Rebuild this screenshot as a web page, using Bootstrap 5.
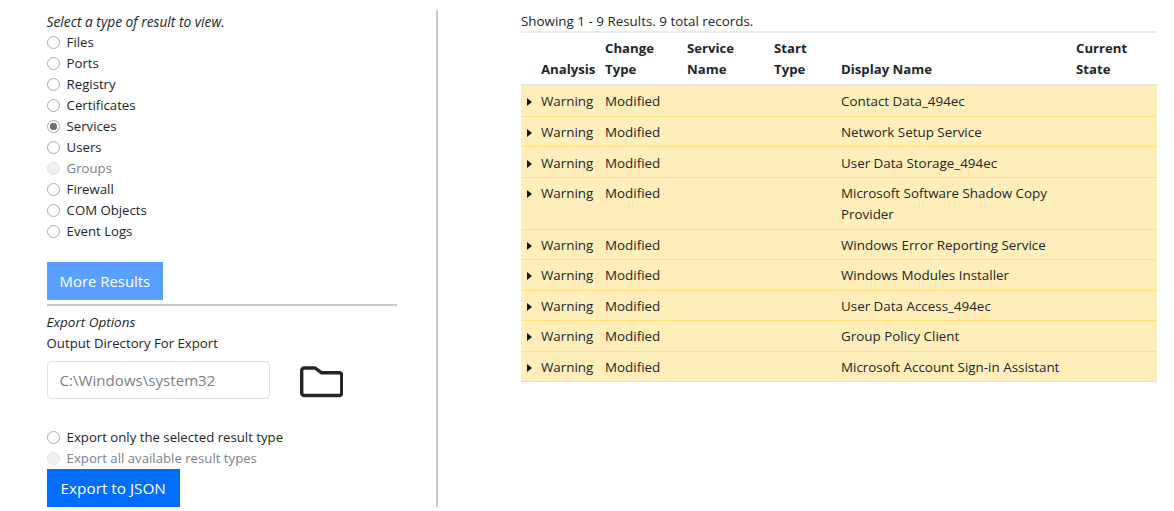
<!DOCTYPE html>
<html lang="en">
<head>
<meta charset="utf-8">
<title>Results</title>
<link href="https://cdn.jsdelivr.net/npm/bootstrap@5.3.0/dist/css/bootstrap.min.css" rel="stylesheet">
<style>
html,body{height:100%;overflow:hidden}
body{font-family:"Open Sans","Noto Sans",sans-serif;font-size:13.2px;line-height:21px;color:#212529;background:#fff}
.page-wrap{padding-top:10px;height:507px}
.left-pane{width:438px;height:497px;padding:1px 39px 0 46.6px;border-right:2px solid #c8c8c8}
.right-pane{margin-left:83px;width:636px;padding-top:1px}
.intro-em{font-size:13.75px}
.opts-em{font-size:13.5px}
.opt-row{display:flex;align-items:center;height:21px;margin:0;padding:0;min-height:21px}
.opt-row .form-check-input{width:13px;height:13px;margin:0 7px 0 0;float:none;border:1px solid #aaa;flex:none;background-color:#fff}
.opt-row .form-check-input:checked{background-color:#fff;border-color:#aaa;background-image:radial-gradient(circle,#6f6f6f 0 3.4px,transparent 4px)}
.opt-row .form-check-input:disabled{opacity:1;background:#efefef;border-color:#e2e2e2}
.opt-row .form-check-input:disabled~.form-check-label{opacity:1;color:#7b8087}
.btn-main{font-size:15.3px;line-height:24px;padding:6px 13px;height:38px;border-radius:0;background:#006dff;border:1px solid #006dff;color:#fff}
.btn-main:disabled{background:#599fff;border-color:#599fff;opacity:1;color:#fff}
.more-btn{margin-top:20px;font-size:14.9px;padding:6px 12px}
.split-rule{height:2px;background:#c8c8c8;margin:4px 0 6px;opacity:1;border:0}
.dir-row{margin-top:7px}
.dir-input{width:223.5px;height:38px;font-size:15.1px;padding:6px 12px;border:1px solid #dee2e6;border-radius:4px;color:#6c757d}
.dir-input::placeholder{color:#7b8087;opacity:1}
.folder-ico{width:43px;height:32px;margin-left:29.500px;margin-top:4.500px;flex:none}
.export-radios{margin-top:28px}
.count-line{height:21px;font-size:13.4px}
.res-table{table-layout:fixed;width:636px;margin:-1px 0 0;font-size:13.4px;line-height:21px}
.res-table.table-sm>:not(caption)>*>*{padding:5.200px 0 3.400px;vertical-align:top;box-shadow:none}
.res-table.table-sm>thead>tr>th{vertical-align:bottom;font-weight:700;font-size:13.2px;background:#fff;padding:5px 0 4.200px;border-top:2px solid #e9ecef;border-bottom:2px solid #e2e5ea;color:#212529}
.res-table.table-sm>tbody>tr>*{background:#ffeeba;border-bottom:1px solid #ffdf7e;color:#212529}
.res-table>tbody{border-top:0}
.caret-mark{display:inline-block;width:0;height:0;border-top:4px solid transparent;border-bottom:4px solid transparent;border-left:5px solid #111;margin:0 0 0 6px;vertical-align:0}
</style>
</head>
<body>
<div class="page-wrap d-flex">
  <div class="left-pane">
    <div class="intro-em"><em>Select a type of result to view.</em></div>
    <div class="form-check opt-row"><input class="form-check-input" type="radio" name="rt" id="r1"><label class="form-check-label" for="r1">Files</label></div>
    <div class="form-check opt-row"><input class="form-check-input" type="radio" name="rt" id="r2"><label class="form-check-label" for="r2">Ports</label></div>
    <div class="form-check opt-row"><input class="form-check-input" type="radio" name="rt" id="r3"><label class="form-check-label" for="r3">Registry</label></div>
    <div class="form-check opt-row"><input class="form-check-input" type="radio" name="rt" id="r4"><label class="form-check-label" for="r4">Certificates</label></div>
    <div class="form-check opt-row"><input class="form-check-input" type="radio" name="rt" id="r5" checked><label class="form-check-label" for="r5">Services</label></div>
    <div class="form-check opt-row"><input class="form-check-input" type="radio" name="rt" id="r6"><label class="form-check-label" for="r6">Users</label></div>
    <div class="form-check opt-row"><input class="form-check-input" type="radio" name="rt" id="r7" disabled><label class="form-check-label" for="r7">Groups</label></div>
    <div class="form-check opt-row"><input class="form-check-input" type="radio" name="rt" id="r8"><label class="form-check-label" for="r8">Firewall</label></div>
    <div class="form-check opt-row"><input class="form-check-input" type="radio" name="rt" id="r9"><label class="form-check-label" for="r9">COM Objects</label></div>
    <div class="form-check opt-row"><input class="form-check-input" type="radio" name="rt" id="r10"><label class="form-check-label" for="r10">Event Logs</label></div>
    <button class="btn btn-main more-btn d-block" type="button" disabled>More Results</button>
    <hr class="split-rule">
    <div class="opts-em"><em>Export Options</em></div>
    <div>Output Directory For Export</div>
    <div class="d-flex dir-row">
      <input class="form-control dir-input" type="text" placeholder="C:\Windows\system32">
      <svg class="folder-ico" viewBox="0 0 43 32" fill="none" stroke="#212529" stroke-width="3.4" stroke-linejoin="round" aria-hidden="true"><path d="M1.700 4.500a2.500 2.500 0 0 1 2.500-2.500h11l6.500 4.800h17.600a2.500 2.500 0 0 1 2.500 2.500v17.700a2.500 2.500 0 0 1-2.500 2.500h-35.100a2.500 2.500 0 0 1-2.500-2.500z"/></svg>
    </div>
    <div class="export-radios">
      <div class="form-check opt-row"><input class="form-check-input" type="radio" name="ex" id="e1"><label class="form-check-label" for="e1">Export only the selected result type</label></div>
      <div class="form-check opt-row"><input class="form-check-input" type="radio" name="ex" id="e2" disabled><label class="form-check-label" for="e2">Export all available result types</label></div>
    </div>
    <button class="btn btn-main d-block" type="button">Export to JSON</button>
  </div>
  <div class="right-pane">
    <div class="count-line">Showing 1 - 9 Results. 9 total records.</div>
    <table class="table table-sm res-table">
      <colgroup><col style="width:20px"><col style="width:64px"><col style="width:82px"><col style="width:87px"><col style="width:67px"><col style="width:235px"><col style="width:81px"></colgroup>
      <thead><tr><th></th><th>Analysis</th><th>Change<br>Type</th><th>Service<br>Name</th><th>Start<br>Type</th><th>Display Name</th><th>Current<br>State</th></tr></thead>
      <tbody>
        <tr><td><span class="caret-mark"></span></td><td>Warning</td><td>Modified</td><td></td><td></td><td>Contact Data_494ec</td><td></td></tr>
        <tr><td><span class="caret-mark"></span></td><td>Warning</td><td>Modified</td><td></td><td></td><td>Network Setup Service</td><td></td></tr>
        <tr><td><span class="caret-mark"></span></td><td>Warning</td><td>Modified</td><td></td><td></td><td>User Data Storage_494ec</td><td></td></tr>
        <tr><td><span class="caret-mark"></span></td><td>Warning</td><td>Modified</td><td></td><td></td><td>Microsoft Software Shadow Copy<br>Provider</td><td></td></tr>
        <tr><td><span class="caret-mark"></span></td><td>Warning</td><td>Modified</td><td></td><td></td><td>Windows Error Reporting Service</td><td></td></tr>
        <tr><td><span class="caret-mark"></span></td><td>Warning</td><td>Modified</td><td></td><td></td><td>Windows Modules Installer</td><td></td></tr>
        <tr><td><span class="caret-mark"></span></td><td>Warning</td><td>Modified</td><td></td><td></td><td>User Data Access_494ec</td><td></td></tr>
        <tr><td><span class="caret-mark"></span></td><td>Warning</td><td>Modified</td><td></td><td></td><td>Group Policy Client</td><td></td></tr>
        <tr><td><span class="caret-mark"></span></td><td>Warning</td><td>Modified</td><td></td><td></td><td>Microsoft Account Sign-in Assistant</td><td></td></tr>
      </tbody>
    </table>
  </div>
</div>
<script src="https://cdn.jsdelivr.net/npm/bootstrap@5.3.0/dist/js/bootstrap.bundle.min.js"></script>
</body>
</html>
